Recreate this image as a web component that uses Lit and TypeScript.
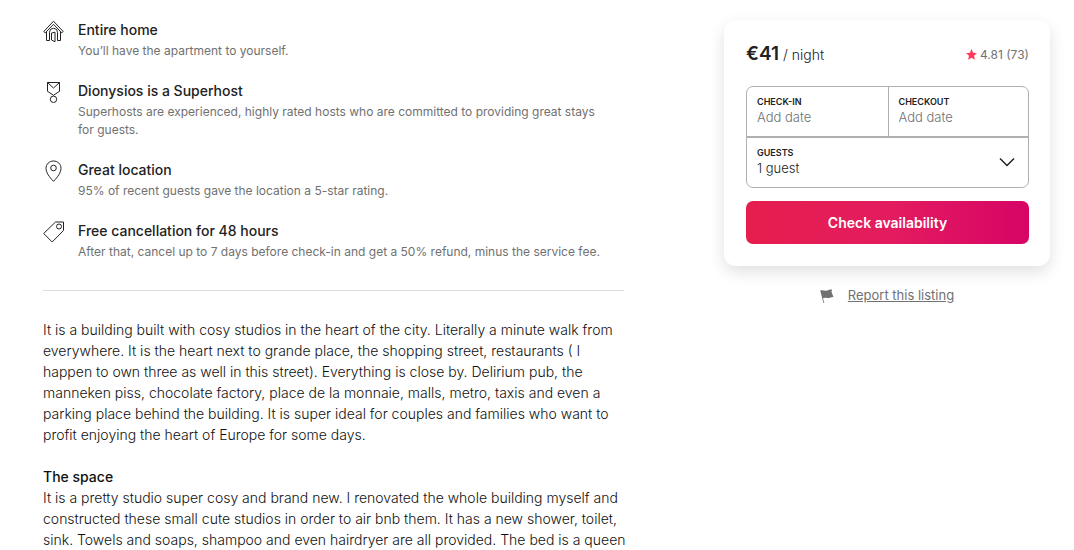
import { LitElement, html, css, svg } from "lit";
import { customElement } from "lit/decorators.js";

const icons = {
  home: svg`<path d="M.8 11.500 10.500 1.200l9.700 10.300M.8 11.500l1.500 1.300L10.500 4.300l8.200 8.500 1.500-1.300M3.500 12v8.500M17.500 12v8.500M3.500 20.500h3v-8.200a4 4 0 0 1 8 0v8.200h3M8.500 20v-7l3.500-.8v9.600L8.500 20"/>`,
  medal: svg`<path d="M4.500 1.500h12v8.800l-6 4-6-4zM4.500 1.500l6 5.500 6-5.500"/><circle cx="10.500" cy="18.300" r="3.200"/>`,
  pin: svg`<path d="M10.500 1c4.300 0 7.500 3.200 7.500 7.300 0 4.200-3.300 8.800-7.500 13C6.300 17.100 3 12.500 3 8.300 3 4.200 6.200 1 10.500 1z"/><circle cx="10.500" cy="8" r="2.800"/>`,
  tag: svg`<path d="M12.500 1h8v8.500L9.200 21 .700 12.500z"/><circle cx="16" cy="5.500" r="2.500"/>`,
};

const highlights = [
  { icon: icons.home, title: "Entire home", text: "You’ll have the apartment to yourself." },
  {
    icon: icons.medal,
    title: "Dionysios is a Superhost",
    text: "Superhosts are experienced, highly rated hosts who are committed to providing great stays\nfor guests.",
  },
  { icon: icons.pin, title: "Great location", text: "95% of recent guests gave the location a 5-star rating." },
  {
    icon: icons.tag,
    title: "Free cancellation for 48 hours",
    text: "After that, cancel up to 7 days before check-in and get a 50% refund, minus the service fee.",
  },
];

const summary = `It is a building built with cosy studios in the heart of the city. Literally a minute walk from
everywhere. It is the heart next to grande place, the shopping street, restaurants ( I
happen to own three as well in this street). Everything is close by. Delirium pub, the
manneken piss, chocolate factory, place de la monnaie, malls, metro, taxis and even a
parking place behind the building. It is super ideal for couples and families who want to
profit enjoying the heart of Europe for some days.`;

const space = `It is a pretty studio super cosy and brand new. I renovated the whole building myself and
constructed these small cute studios in order to air bnb them. It has a new shower, toilet,
sink. Towels and soaps, shampoo and even hairdryer are all provided. The bed is a queen`;

@customElement("app-root")
export class AppRoot extends LitElement {
  static styles = css`
    :host {
      display: block;
      color: #222;
      background: #fff;
      font: 300 14px/21px Inter, "Liberation Sans", sans-serif;
    }
    * { box-sizing: border-box; }
    .page {
      display: grid;
      grid-template-columns: minmax(0, 581fr) minmax(0, 326fr);
      column-gap: 100px;
      padding: 19px 24px 0 43px;
      align-items: start;
    }
    ul { list-style: none; margin: 0; padding: 0 0 29px; display: grid; gap: 20px; border-bottom: 1px solid #ddd; }
    li { display: flex; gap: 13px; }
    .icon { flex: none; width: 22px; height: 22px; margin-top: 1px; fill: none; stroke: #222; stroke-width: 1; }
    h2, h3 { margin: 0; font-size: 14px; line-height: 21px; font-weight: 500; }
    .note { margin: 0; padding-top: 2px; font-size: 12px; line-height: 18px; font-weight: 400; color: #717171; white-space: pre-line; }
    .about { padding-top: 28px; margin-right: -20px; color: #111; }
    .about p { margin: 0; white-space: pre-line; }
    .about h3 { margin-top: 21px; }
    .card {
      margin-top: 1px;
      padding: 22px 21px 22px 22px;
      border-radius: 12px;
      box-shadow: 0 6px 16px rgba(0, 0, 0, 0.12);
    }
    .top { display: flex; justify-content: space-between; align-items: baseline; line-height: 24px; }
    .price { font-size: 19px; font-weight: 600; }
    .rating { display: flex; align-items: center; gap: 3px; font-size: 12px; font-weight: 400; color: #717171; }
    .star { width: 11px; height: 11px; fill: #ff385c; }
    .fields {
      display: grid;
      grid-template-columns: 1fr 1fr;
      margin: 19px 0 13px;
      border: 1px solid #b0b0b0;
      border-radius: 7px;
    }
    .field { position: relative; height: 49px; padding: 9px 10px 0; }
    .field + .field { border-left: 1px solid #b0b0b0; }
    .fields .guests { grid-column: 1 / -1; height: 51px; border-left: 0; border-top: 2px solid #b0b0b0; }
    label { display: block; font-size: 9px; line-height: 12px; font-weight: 600; }
    input, select {
      display: block;
      width: 100%;
      height: 18px;
      margin: 0;
      padding: 0;
      border: 0;
      background: none;
      appearance: none;
      font: inherit;
      font-size: 13px;
      line-height: 18px;
      color: #222;
      outline: none;
    }
    input::placeholder { color: #717171; opacity: 1; }
    .chevron { position: absolute; right: 13px; top: 16px; width: 16px; height: 16px; fill: none; stroke: #222; stroke-width: 1.5; pointer-events: none; }
    .check {
      display: block;
      width: 100%;
      height: 43px;
      border: 0;
      border-radius: 7px;
      color: #fff;
      background: linear-gradient(to right, #e61e4d 0%, #e31c5f 50%, #d70466 100%);
      font: inherit;
      font-weight: 600;
    }
    .report { display: flex; justify-content: center; align-items: center; gap: 14px; margin-top: 19px; }
    .flag { width: 14px; height: 14px; fill: #717171; }
    a { color: #717171; font-size: 13px; font-weight: 400; }
  `;

  render() {
    return html`
      <main class="page">
        <div>
          <ul>
            ${highlights.map(
              (h) => html`<li>
                <svg class="icon" viewBox="0 0 22 22" aria-hidden="true">${h.icon}</svg>
                <div><h2>${h.title}</h2><p class="note">${h.text}</p></div>
              </li>`
            )}
          </ul>
          <section class="about">
            <p>${summary}</p>
            <h3>The space</h3>
            <p>${space}</p>
          </section>
        </div>
        <aside>
          <form class="card">
            <div class="top">
              <div><span class="price">€41</span> / night</div>
              <div class="rating">
                <svg class="star" viewBox="0 0 22 22" aria-hidden="true"><path d="m11 0 3.200 7.600 7.800.700-6 5.300 1.900 8L11 17.300l-6.900 4.300 1.900-8-6-5.300 7.800-.700z"/></svg>
                <span>4.81 (73)</span>
              </div>
            </div>
            <div class="fields">
              <div class="field"><label for="in">CHECK-IN</label><input id="in" placeholder="Add date" /></div>
              <div class="field"><label for="out">CHECKOUT</label><input id="out" placeholder="Add date" /></div>
              <div class="field guests">
                <label for="guests">GUESTS</label>
                <select id="guests"><option>1 guest</option></select>
                <svg class="chevron" viewBox="0 0 16 16" aria-hidden="true"><path d="m1 4.500 7 7 7-7"/></svg>
              </div>
            </div>
            <button class="check" type="button">Check availability</button>
          </form>
          <div class="report">
            <svg class="flag" viewBox="0 0 14 14" aria-hidden="true"><path d="M.200 1.500C3 .500 4.500 2.300 7 1.500c2-.700 3.500-1.200 5-1l-.500 2.500 2 5c-2.500-.300-4 1.500-6.500.900C5 8.500 4 8.800 3 9.200L4.300 14h-.800z"/></svg>
            <a href="#">Report this listing</a>
          </div>
        </aside>
      </main>
    `;
  }
}
